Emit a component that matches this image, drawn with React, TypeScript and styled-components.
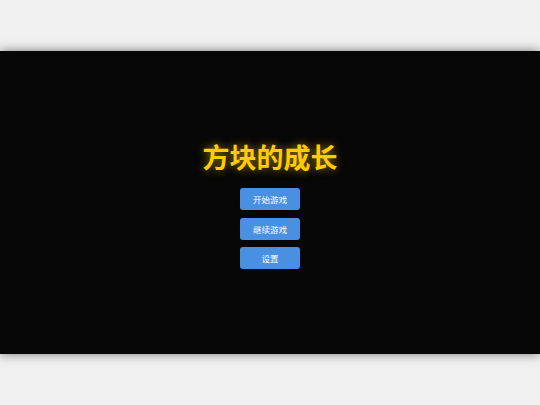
import styled, {createGlobalStyle} from "styled-components"

const GlobalStyle = createGlobalStyle`
  html, body {
    margin: 0;
    padding: 0;
    height: 100%;
    background: #f0f0f0;
    font-family: "Noto Sans CJK SC", "Noto Sans", sans-serif;
  }
  #root {
    height: 100%;
  }
`

const Page = styled.div`
  height: 100vh;
  display: flex;
  align-items: center;
  justify-content: center;
`

const Stage = styled.div`
  width: 100vw;
  aspect-ratio: 16 / 9;
  background: #070707;
  box-shadow: 0 0 10px rgba(0, 0, 0, 0.5);
  display: flex;
  flex-direction: column;
  align-items: center;
  justify-content: center;
`

const Title = styled.h1`
  margin: 4px 0 14px;
  font-size: 27px;
  line-height: 34px;
  font-weight: 700;
  color: #ffcc00;
  text-shadow: 0 0 8px rgba(255, 204, 0, 0.6);
`

const Menu = styled.div`
  display: flex;
  flex-direction: column;
  align-items: center;
  gap: 7.5px;
`

const MenuButton = styled.button`
  width: 60px;
  height: 22px;
  padding: 0;
  border: none;
  border-radius: 3px;
  background: #4a90e2;
  color: #ffffff;
  font-family: inherit;
  font-size: 8.5px;
  cursor: pointer;
`

const items = ["开始游戏", "继续游戏", "设置"]

export default function App() {
  return (
    <>
      <GlobalStyle />
      <Page>
        <Stage>
          <Title>方块的成长</Title>
          <Menu>
            {items.map(item => (
              <MenuButton key={item}>{item}</MenuButton>
            ))}
          </Menu>
        </Stage>
      </Page>
    </>
  )
}
